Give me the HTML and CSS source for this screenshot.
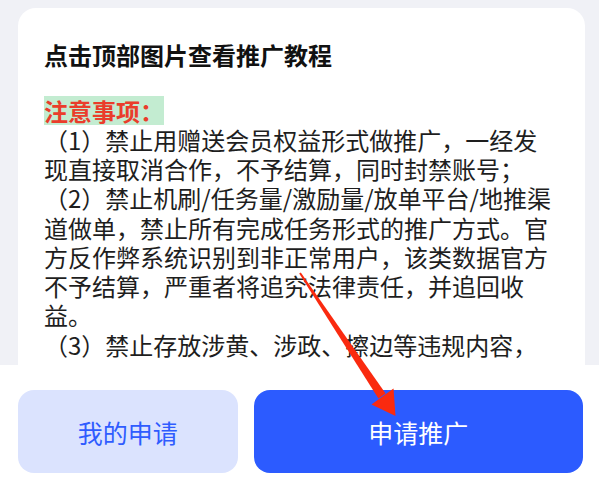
FILE: index.html
```
<!DOCTYPE html>
<html lang="zh-CN">
<head>
<meta charset="utf-8">
<title>推广须知</title>
<link rel="stylesheet" href="styles.css">
</head>
<body>
<div class="page">
  <div class="scroll">
    <div class="card">
      <h1 class="title">点击顶部图片查看推广教程</h1>
      <div class="notice">
        <p class="notice-head"><span class="mark">注意事项：</span></p>
        <p>（1）禁止用赠送会员权益形式做推广，一经发现直接取消合作，不予结算，同时封禁账号；</p>
        <p>（2）禁止机刷/任务量/激励量/放单平台/地推渠道做单，禁止所有完成任务形式的推广方式。官方反作弊系统识别到非正常用户，该类数据官方不予结算，严重者将追究法律责任，并追回收益。</p>
        <p>（3）禁止存放涉黄、涉政、擦边等违规内容，</p>
      </div>
    </div>
  </div>
  <div class="footer">
    <button class="btn btn-light" type="button">我的申请</button>
    <button class="btn btn-primary" type="button">申请推广</button>
  </div>
  <svg class="arrow" width="599" height="488" viewBox="0 0 599 488" aria-hidden="true">
    <polygon points="299.2,273.6 300.8,272.4 385.6,393.6 378.4,398.4" fill="#fa2a0f"/>
    <polygon points="371.5,404.5 393.5,388.5 395.5,416" fill="#fa2a0f"/>
  </svg>
</div>
</body>
</html>
```
FILE: styles.css
```
html, body {
  margin: 0;
  padding: 0;
}
body {
  background: #f0f1f6;
  font-family: "Noto Sans CJK SC", "Noto Sans", sans-serif;
  color: #1e1e1e;
}
.page {
  position: relative;
  width: 599px;
  height: 488px;
  display: flex;
  flex-direction: column;
  overflow: hidden;
}
.scroll {
  flex: 1;
  overflow: hidden;
  padding: 8px 14px 0 18px;
}
.card {
  background: #fff;
  border-radius: 18px;
  padding: 32px 26px 60px 26px;
}
.title {
  margin: 0;
  font-size: 24px;
  line-height: 29px;
  font-weight: 700;
  color: #111;
}
.notice {
  margin-top: 26.5px;
  font-size: 24px;
  line-height: 29.25px;
}
.notice p {
  margin: 0;
}
.mark {
  display: inline-block;
  height: 29.25px;
  background: #c3ecd1;
  color: #ea3d2b;
  font-weight: 700;
}
.footer {
  flex: none;
  height: 123px;
  box-sizing: border-box;
  background: #fff;
  padding: 25px 16px 15px 18px;
  display: flex;
  gap: 16px;
}
.btn {
  border: none;
  border-radius: 16px;
  font-family: "Noto Sans CJK SC", "Noto Sans", sans-serif;
  font-size: 25px;
  height: 83px;
  padding: 0;
}
.btn-light {
  flex: 2;
  background: #dbe3fe;
  color: #2f5cff;
}
.btn-primary {
  flex: 3;
  background: #2c5bff;
  color: #fff;
}
.arrow {
  position: absolute;
  left: 0;
  top: 0;
  pointer-events: none;
}
```
